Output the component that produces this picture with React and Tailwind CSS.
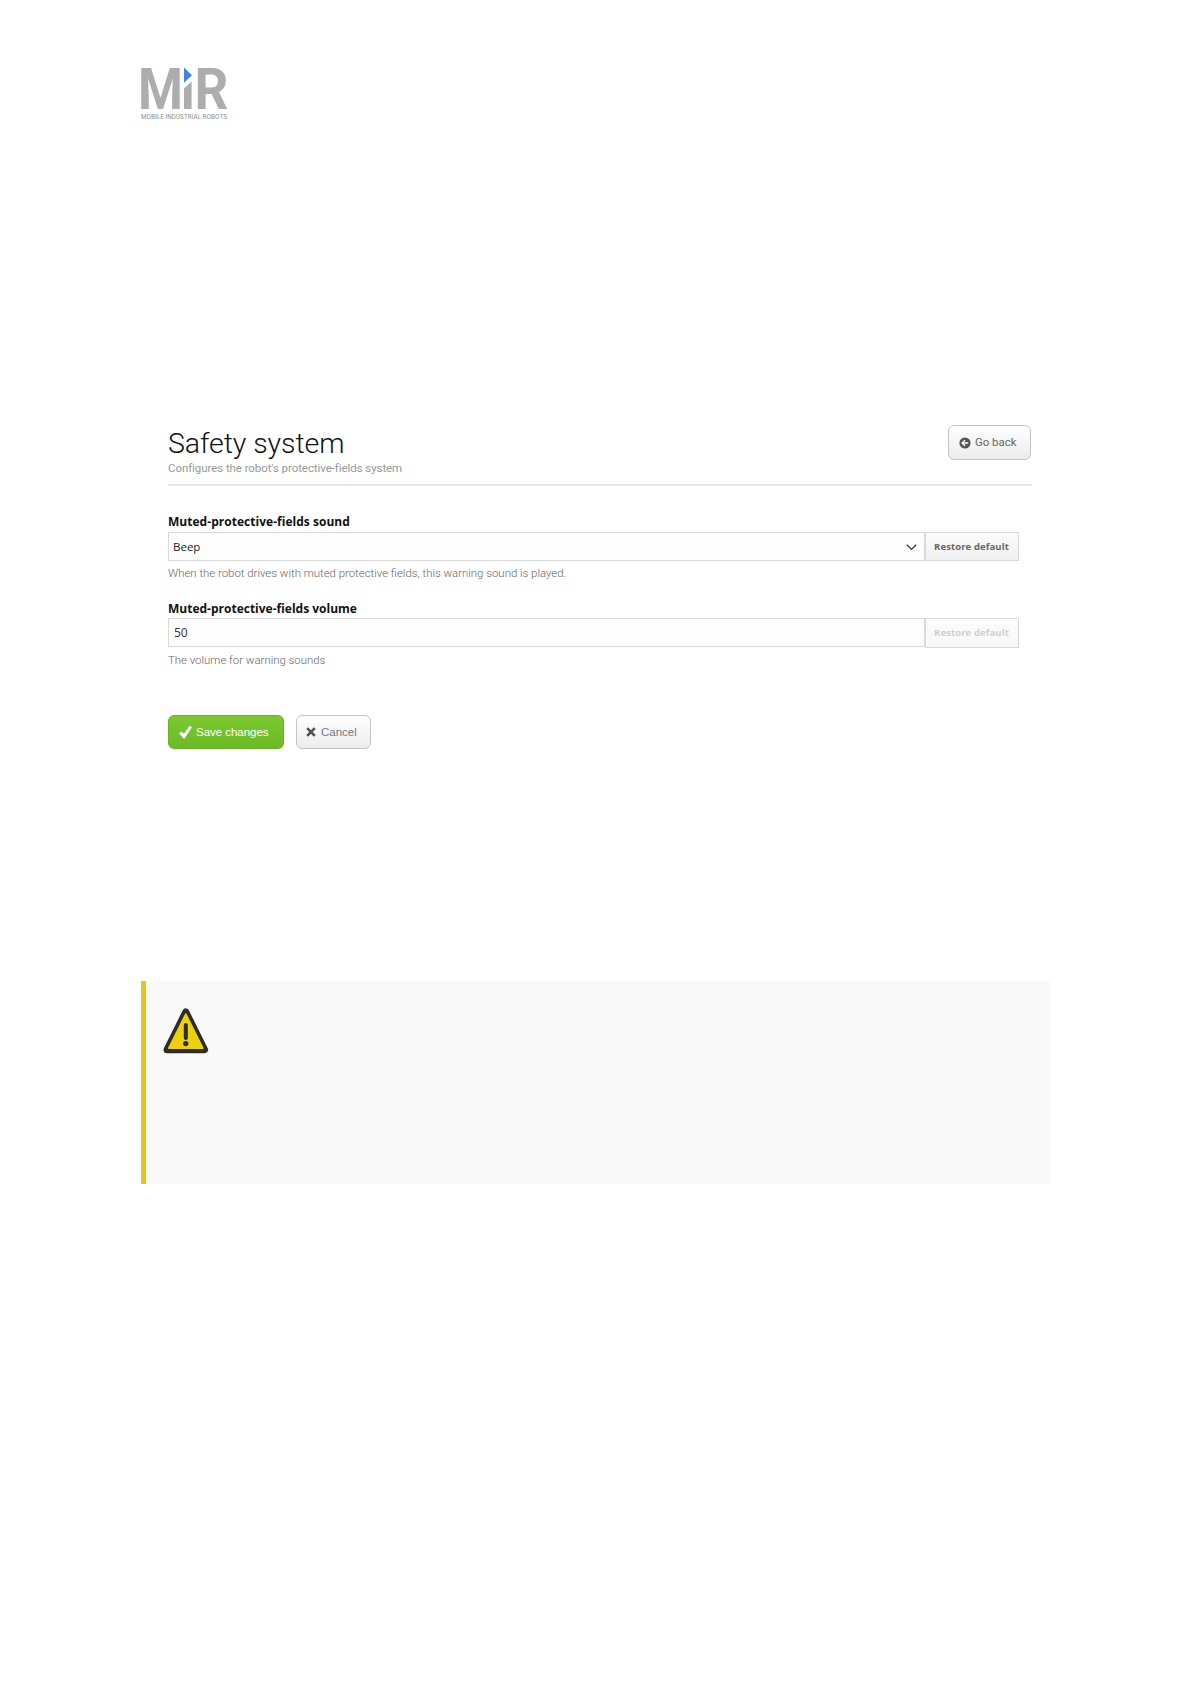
import React, { useState } from 'react';

const SOUNDS = ['Beep', 'Foghorn', 'Horn'];

const MirLogo = () => (
    <svg width="110" height="80" viewBox="-4 -20 110 80" className="block" fill="#acadac">
        <text x="-3" y="42" fontFamily="Roboto" fontWeight="700" fontSize="58" textLength="45" lengthAdjust="spacingAndGlyphs">M</text>
        <path d="M43 0.6 L51 8.2 L43 15.8 Z" fill="#3f86dc" />
        <path d="M43 21.5 L50.6 14.5 V42 H43 Z" />
        <text x="53.4" y="42" fontFamily="Roboto" fontWeight="700" fontSize="58" textLength="33.8" lengthAdjust="spacingAndGlyphs">R</text>
        <text x="0" y="51.6" fontFamily="Roboto" fontSize="7.4" textLength="86" lengthAdjust="spacingAndGlyphs" fill="#8f8f8f">MOBILE INDUSTRIAL ROBOTS</text>
    </svg>
);

const BackIcon = () => (
    <svg width="12" height="12" viewBox="0 0 12 12" className="block shrink-0">
        <circle cx="6" cy="6" r="5.6" fill="#555" />
        <path d="M9.3 6 H3.4 M6 3.2 L3.2 6 L6 8.8" fill="none" stroke="#fff" strokeWidth="1.5" />
    </svg>
);

const CheckIcon = () => (
    <svg width="13" height="14" viewBox="0 0 13 14" className="block shrink-0">
        <path d="M0.2 8.6 L2.6 6.4 L5 8.8 L10.6 0.8 L12.9 2.2 L5.6 13.4 L4.6 13.4 Z" fill="#fff" />
    </svg>
);

const CrossIcon = () => (
    <svg width="10" height="10" viewBox="0 0 10 10" className="block shrink-0">
        <path d="M1.2 1.2 L8.8 8.8 M8.8 1.2 L1.2 8.8" stroke="#505050" strokeWidth="2.6" />
    </svg>
);

const WarningIcon = () => (
    <svg width="46" height="46" viewBox="0 0 46 46" className="block">
        <path d="M22.8 4 L41.6 41.7 H4 Z" fill="#2c2c2a" stroke="#2c2c2a" strokeWidth="7" strokeLinejoin="round" />
        <path d="M22.8 6 L39.8 40.2 H5.8 Z" fill="#ecd10c" stroke="#ecd10c" strokeWidth="1.6" strokeLinejoin="round" />
        <path d="M22.8 17 V30" stroke="#2c2c2a" strokeWidth="4" strokeLinecap="round" />
        <circle cx="22.8" cy="35.6" r="2.6" fill="#2c2c2a" />
    </svg>
);

const RestoreButton = ({ disabled, onClick }) => (
    <button
        disabled={disabled}
        onClick={onClick}
        className={`w-[94px] shrink-0 border border-[#d9d9d9] bg-linear-to-b from-[#fcfcfc] pt-px pr-px font-['Open_Sans',sans-serif] text-[9.5px] font-bold whitespace-nowrap tracking-[0.1px] ${disabled ? 'h-[30px] to-[#f7f7f7] text-[#cfcfcf]' : 'h-[29px] to-[#f0f0f0] text-[#666]'}`}
    >
        Restore default
    </button>
);

const App = () => {
    const [sound, setSound] = useState('Beep');
    const [volume, setVolume] = useState('50');

    return (
        <div className="min-h-[1684px] w-[1191px] bg-white pt-[47px] pl-[137px] font-[Roboto,sans-serif]">
            <MirLogo />

            {/* Safety system settings */}
            <main className="mt-[298px] ml-[31px] w-[864px]">
                <header className="flex h-[61px] items-start justify-between border-b-2 border-[#e8e8e8]">
                    <div>
                        <h1 className="h-[36px] pt-px text-[28.5px] leading-[36px] font-light tracking-[-0.07px] whitespace-nowrap text-[#111]">Safety system</h1>
                        <p className="text-[11.5px] leading-[14px] tracking-[-0.07px] whitespace-nowrap text-[#999]">Configures the robot's protective-fields system</p>
                    </div>
                    <button className="mr-px flex h-[35px] w-[83px] items-center rounded-[6px] border border-[#c4c4c4] bg-linear-to-b from-white to-[#ececec] pl-[10px] text-[11.4px] text-[#666]">
                        <BackIcon />
                        <span className="ml-[4px] whitespace-nowrap">Go back</span>
                    </button>
                </header>

                <section className="mt-[27px] h-[87px]">
                    <label className="block h-[18px] font-['Open_Sans',sans-serif] text-[12px] leading-[18px] font-bold tracking-[0.03px] whitespace-nowrap text-[#111]">Muted-protective-fields sound</label>
                    <div className="mt-px flex items-start">
                        <div className="relative h-[29px] w-[757px]">
                            <select
                                value={sound}
                                onChange={(e) => setSound(e.target.value)}
                                className="block h-full w-full appearance-none border border-[#d9d9d9] bg-[#fdfdfd] pl-[4px] font-['Open_Sans',sans-serif] text-[11.5px] text-[#222]"
                            >
                                {SOUNDS.map((s) => (
                                    <option key={s}>{s}</option>
                                ))}
                            </select>
                            <svg width="11" height="7" viewBox="0 0 11 7" className="pointer-events-none absolute top-[12px] right-[8px]">
                                <path d="M0.8 0.8 L5.5 5.4 L10.2 0.8" fill="none" stroke="#333" strokeWidth="1.3" />
                            </svg>
                        </div>
                        <RestoreButton onClick={() => setSound('Beep')} />
                    </div>
                    <p className="mt-[5px] text-[11.4px] leading-[14px] font-light whitespace-nowrap text-[#666]">When the robot drives with muted protective fields, this warning sound is played.</p>
                </section>

                <section className="h-[115px]">
                    <label className="block h-[18px] font-['Open_Sans',sans-serif] text-[12px] leading-[18px] font-bold whitespace-nowrap text-[#111]">Muted-protective-fields volume</label>
                    <div className="flex items-start">
                        <input
                            value={volume}
                            onChange={(e) => setVolume(e.target.value)}
                            className="h-[29px] w-[757px] border border-[#d9d9d9] bg-[#fdfdfd] pl-[5px] font-['Open_Sans',sans-serif] text-[12px] text-[#333]"
                        />
                        <RestoreButton disabled />
                    </div>
                    <p className="mt-[5px] text-[11.4px] leading-[14px] font-light whitespace-nowrap text-[#666]">The volume for warning sounds</p>
                </section>

                <div className="flex gap-[12px] font-['Liberation_Sans',sans-serif] text-[11.5px]">
                    <button className="flex h-[34px] w-[116px] items-center rounded-[6px] border border-[#68b323] bg-linear-to-b from-[#7cc92f] to-[#6bba27] pl-[10px] text-white">
                        <CheckIcon />
                        <span className="ml-[4px] pt-[2px] tracking-[-0.03px] whitespace-nowrap">Save changes</span>
                    </button>
                    <button className="flex h-[34px] w-[75px] items-center rounded-[6px] border border-[#c4c4c4] bg-linear-to-b from-white to-[#ececec] pl-[9px] text-[#777]">
                        <CrossIcon />
                        <span className="ml-[5px] pt-[2px] whitespace-nowrap">Cancel</span>
                    </button>
                </div>
            </main>

            <aside className="mt-[232px] ml-[4px] h-[203px] w-[909px] border-l-[5px] border-[#edc31a] bg-[#f9f9f9] pt-[27px] pl-[17px]">
                <WarningIcon />
            </aside>
        </div>
    );
};

export default App;
